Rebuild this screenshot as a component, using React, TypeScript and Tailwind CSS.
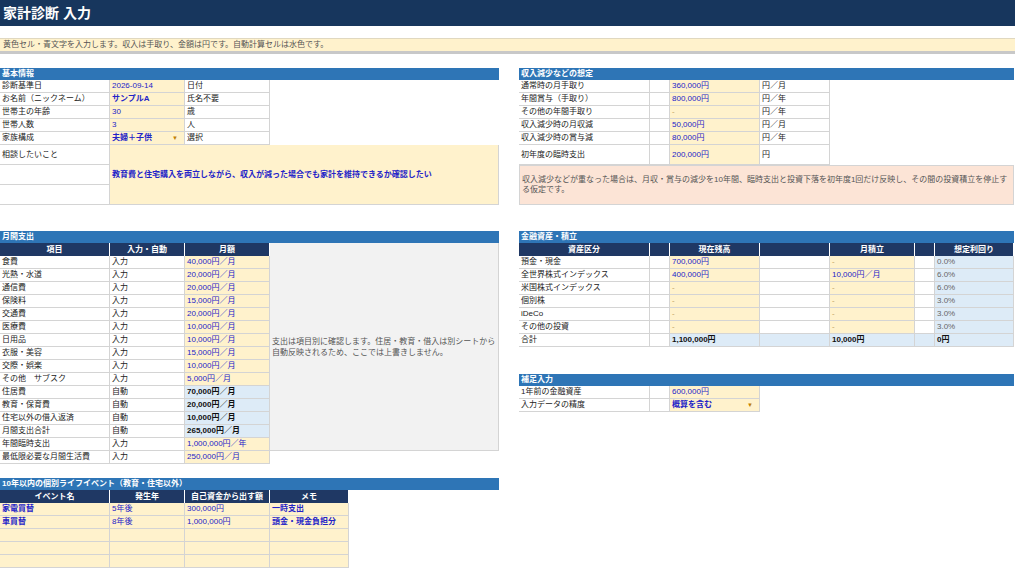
import React from "react";

const F = { fontFamily: '"Liberation Sans","Noto Sans CJK JP",sans-serif' };
type C = { w: string; t?: string; bg?: string; k?: string; b?: boolean; h?: string };
const Y = "bg-[#fff2cc]";
const L = "bg-[#ddebf7]";
const BL = "text-[#2323c8]";

function Cell({ w, t = "", bg = "bg-white", k = "text-[#222]", b, h = "h-[13px]" }: C) {
  return (
    <div className={`${w} ${h} ${bg} ${k} ${b ? "font-bold" : ""} shrink-0 border-r border-b border-[#d4d4d4] px-[2px] flex items-center text-[8px] leading-none whitespace-nowrap overflow-hidden`}>
      {t}
    </div>
  );
}
function Row({ cells }: { cells: C[] }) {
  return <div className="flex">{cells.map((c, i) => <Cell key={i} {...c} />)}</div>;
}
function Head({ t, w }: { t: string; w: string }) {
  return <div className={`${w} h-[12px] bg-[#2e75b6] text-white text-[8px] font-bold px-[2px] flex items-center leading-none`}>{t}</div>;
}
function TH({ w, t }: { w: string; t: string }) {
  return <div className={`${w} h-[13px] shrink-0 bg-[#1f3864] text-white text-[8px] font-bold flex items-center justify-center border-r border-white leading-none`}>{t}</div>;
}
const Dd = () => <span className="ml-auto mr-[4px] text-[#c08000] text-[6px]">▼</span>;

export default function App() {
  const monthly: [string, string, string, boolean][] = [
    ["食費", "入力", "40,000円／月", false], ["光熱・水道", "入力", "20,000円／月", false],
    ["通信費", "入力", "20,000円／月", false], ["保険料", "入力", "15,000円／月", false],
    ["交通費", "入力", "20,000円／月", false], ["医療費", "入力", "10,000円／月", false],
    ["日用品", "入力", "10,000円／月", false], ["衣服・美容", "入力", "15,000円／月", false],
    ["交際・娯楽", "入力", "10,000円／月", false], ["その他　サブスク", "入力", "5,000円／月", false],
    ["住居費", "自動", "70,000円／月", true], ["教育・保育費", "自動", "20,000円／月", true],
    ["住宅以外の借入返済", "自動", "10,000円／月", true], ["月間支出合計", "自動", "265,000円／月", true],
    ["年間臨時支出", "入力", "1,000,000円／年", false], ["最低限必要な月間生活費", "入力", "250,000円／月", false],
  ];
  const assets: [string, string, string, string][] = [
    ["預金・現金", "700,000円", "-", "0.0%"], ["全世界株式インデックス", "400,000円", "10,000円／月", "6.0%"],
    ["米国株式インデックス", "-", "-", "6.0%"], ["個別株", "-", "-", "3.0%"],
    ["iDeCo", "-", "-", "3.0%"], ["その他の投資", "-", "-", "3.0%"],
  ];
  return (
    <div style={F} className="w-[1015px] h-[570px] bg-white overflow-hidden relative">
      <div className="h-[26px] bg-[#17365d] text-white text-[14px] font-bold flex items-center px-[3px]">家計診断 入力</div>
      <div className="mt-[12px] h-[13px] bg-[#fff2cc] border-t border-[#e0d8c0] text-[8px] text-[#555] flex items-center px-[3px]">黄色セル・青文字を入力します。収入は手取り、金額は円です。自動計算セルは水色です。</div>
      <div className="h-[3px] bg-[#c8c8c8]" />
      <div className="flex mt-[14px]">
        <div className="w-[499px]">
          <Head t="基本情報" w="w-[499px]" />
          <Row cells={[{ w: "w-[110px]", t: "診断基準日" }, { w: "w-[75px]", t: "2026-09-14", bg: Y, k: BL }, { w: "w-[85px]", t: "日付" }]} />
          <Row cells={[{ w: "w-[110px]", t: "お名前（ニックネーム）" }, { w: "w-[75px]", t: "サンプルA", bg: Y, k: BL, b: true }, { w: "w-[85px]", t: "氏名不要" }]} />
          <Row cells={[{ w: "w-[110px]", t: "世帯主の年齢" }, { w: "w-[75px]", t: "30", bg: Y, k: BL }, { w: "w-[85px]", t: "歳" }]} />
          <Row cells={[{ w: "w-[110px]", t: "世帯人数" }, { w: "w-[75px]", t: "3", bg: Y, k: BL }, { w: "w-[85px]", t: "人" }]} />
          <div className="flex">
            <div className={`w-[75px] ml-[110px] h-[13px] ${Y} ${BL} font-bold text-[8px] flex items-center px-[2px] border-r border-b border-[#d4d4d4] order-2`}>夫婦＋子供<Dd /></div>
            <div className="w-[110px] h-[13px] text-[8px] text-[#222] flex items-center px-[2px] border-r border-b border-[#d4d4d4] order-1 -ml-[110px] mr-0 absolute" />
          </div>
          <div className="-mt-[13px] flex">
            <Cell w="w-[110px]" t="家族構成" />
            <div className="w-[75px] shrink-0" />
            <Cell w="w-[85px]" t="選択" />
          </div>
          <div className="flex">
            <div className="w-[110px] shrink-0">
              <div className="h-[20px] border-r border-b border-[#d4d4d4] text-[8px] px-[2px] pt-[4px] text-[#222]">相談したいこと</div>
              <div className="h-[20px] border-r border-b border-[#d4d4d4]" />
              <div className="h-[20px] border-r border-b border-[#d4d4d4]" />
            </div>
            <div className={`flex-1 h-[60px] ${Y} border-r border-b border-[#d4d4d4] ${BL} font-bold text-[8px] flex items-center px-[2px]`}>教育費と住宅購入を両立しながら、収入が減った場合でも家計を維持できるか確認したい</div>
          </div>
        </div>
        <div className="w-[495px] ml-[20px]">
          <Head t="収入減少などの想定" w="w-[495px]" />
          {[["通常時の月手取り", "360,000円", "円／月"], ["年間賞与（手取り）", "800,000円", "円／年"], ["その他の年間手取り", "-", "円／年"], ["収入減少時の月収減", "50,000円", "円／月"], ["収入減少時の賞与減", "80,000円", "円／年"]].map(r => (
            <Row key={r[0]} cells={[{ w: "w-[131px]", t: r[0] }, { w: "w-[20px]" }, { w: "w-[90px]", t: r[1], bg: Y, k: r[1] === "-" ? "text-[#c0a060]" : BL }, { w: "w-[70px]", t: r[2] }]} />
          ))}
          <Row cells={[{ w: "w-[131px]", t: "初年度の臨時支出", h: "h-[20px]" }, { w: "w-[20px]", h: "h-[20px]" }, { w: "w-[90px]", t: "200,000円", bg: Y, k: BL, h: "h-[20px]" }, { w: "w-[70px]", t: "円", h: "h-[20px]" }]} />
          <div className="h-[40px] bg-[#fce4d6] border border-[#d4d4d4] text-[8px] text-[#555] px-[2px] flex items-center leading-[10px]">収入減少などが重なった場合は、月収・賞与の減少を10年間、臨時支出と投資下落を初年度1回だけ反映し、その間の投資積立を停止する仮定です。</div>
        </div>
      </div>
      <div className="flex mt-[26px]">
        <div className="w-[499px]">
          <Head t="月間支出" w="w-[499px]" />
          <div className="flex">
            <div className="w-[270px] shrink-0">
              <div className="flex"><TH w="w-[110px]" t="項目" /><TH w="w-[75px]" t="入力・自動" /><TH w="w-[85px]" t="月額" /></div>
              {monthly.map(r => (
                <Row key={r[0]} cells={[{ w: "w-[110px]", t: r[0] }, { w: "w-[75px]", t: r[1] }, { w: "w-[85px]", t: r[2], bg: r[3] ? L : Y, k: r[3] ? "text-[#111]" : BL, b: r[3] }]} />
              ))}
            </div>
            <div className="flex-1 h-[208px] bg-[#f2f2f2] border-r border-b border-[#d4d4d4] text-[8px] text-[#555] flex items-center px-[2px] leading-[11px]">支出は項目別に確認します。住居・教育・借入は別シートから自動反映されるため、ここでは上書きしません。</div>
          </div>
        </div>
        <div className="w-[495px] ml-[20px]">
          <Head t="金融資産・積立" w="w-[495px]" />
          <div className="flex"><TH w="w-[131px]" t="資産区分" /><TH w="w-[20px]" t="" /><TH w="w-[90px]" t="現在残高" /><TH w="w-[70px]" t="" /><TH w="w-[85px]" t="月積立" /><TH w="w-[20px]" t="" /><TH w="w-[79px]" t="想定利回り" /></div>
          {assets.map(r => (
            <Row key={r[0]} cells={[{ w: "w-[131px]", t: r[0] }, { w: "w-[20px]" }, { w: "w-[90px]", t: r[1], bg: Y, k: r[1] === "-" ? "text-[#c0a060]" : BL }, { w: "w-[70px]" }, { w: "w-[85px]", t: r[2], bg: Y, k: r[2] === "-" ? "text-[#c0a060]" : BL }, { w: "w-[20px]" }, { w: "w-[79px]", t: r[3], bg: L, k: "text-[#666]" }]} />
          ))}
          <Row cells={[{ w: "w-[131px]", t: "合計" }, { w: "w-[20px]" }, { w: "w-[90px]", t: "1,100,000円", bg: L, b: true, k: "text-[#111]" }, { w: "w-[70px]", bg: L }, { w: "w-[85px]", t: "10,000円", bg: L, b: true, k: "text-[#111]" }, { w: "w-[20px]", bg: L }, { w: "w-[79px]", t: "0円", bg: L, b: true, k: "text-[#111]" }]} />
          <div className="mt-[27px]">
            <Head t="補足入力" w="w-[495px]" />
            <Row cells={[{ w: "w-[131px]", t: "1年前の金融資産" }, { w: "w-[20px]" }, { w: "w-[90px]", t: "600,000円", bg: Y, k: BL }]} />
            <div className="flex">
              <Cell w="w-[131px]" t="入力データの精度" />
              <Cell w="w-[20px]" />
              <div className={`w-[90px] h-[13px] ${Y} ${BL} font-bold text-[8px] flex items-center px-[2px] border-r border-b border-[#d4d4d4]`}>概算を含む<Dd /></div>
            </div>
          </div>
        </div>
      </div>
      <div className="mt-[14px] w-[499px]">
        <Head t="10年以内の個別ライフイベント（教育・住宅以外）" w="w-[499px]" />
        <div className="flex"><TH w="w-[110px]" t="イベント名" /><TH w="w-[75px]" t="発生年" /><TH w="w-[85px]" t="自己資金から出す額" /><TH w="w-[79px]" t="メモ" /></div>
        {[["家電買替", "5年後", "300,000円", "一時支出"], ["車買替", "8年後", "1,000,000円", "頭金・現金負担分"], ["", "", "", ""], ["", "", "", ""], ["", "", "", ""]].map((r, i) => (
          <Row key={i} cells={[{ w: "w-[110px]", t: r[0], bg: Y, k: BL, b: true }, { w: "w-[75px]", t: r[1], bg: Y, k: BL }, { w: "w-[85px]", t: r[2], bg: Y, k: BL }, { w: "w-[79px]", t: r[3], bg: Y, k: BL, b: true }]} />
        ))}
      </div>
    </div>
  );
}
